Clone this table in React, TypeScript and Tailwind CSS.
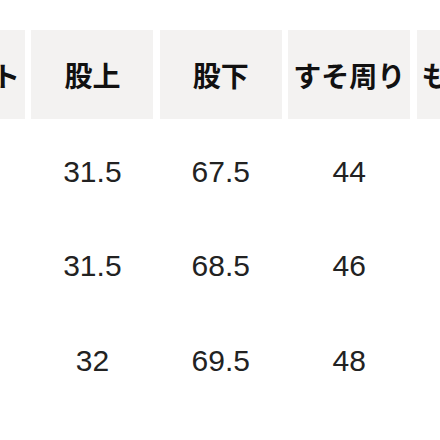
const headers = ['ウエスト', '股上', '股下', 'すそ周り', 'もも周り'];
const rows = [
  ['', '31.5', '67.5', '44', ''],
  ['', '31.5', '68.5', '46', ''],
  ['', '32', '69.5', '48', ''],
];

export default function App() {
  return (
    <div
      className="w-[440px] h-[440px] overflow-hidden bg-white"
      style={{ fontFamily: '"Noto Sans CJK JP", "Noto Sans", sans-serif' }}
    >
      <div className="pt-[30px] -ml-[97px] w-max">
        {/* header */}
        <div className="flex gap-[6.4px]">
          {headers.map((h) => (
            <div
              key={h}
              className="w-[122px] h-[89px] shrink-0 bg-[#f3f2f1] flex items-center justify-center text-[28px] font-bold text-[#111] whitespace-nowrap"
            >
              {h}
            </div>
          ))}
        </div>
        {/* body */}
        <div className="pt-[5px]">
          {rows.map((r, i) => (
            <div key={i} className="flex gap-[6.4px] h-[94.5px]">
              {r.map((v, j) => (
                <div
                  key={j}
                  className="w-[122px] shrink-0 flex items-center justify-center text-[30px] text-[#222]"
                  style={{ fontFamily: '"Liberation Sans", Arial, sans-serif' }}
                >
                  {v}
                </div>
              ))}
            </div>
          ))}
        </div>
      </div>
    </div>
  );
}
